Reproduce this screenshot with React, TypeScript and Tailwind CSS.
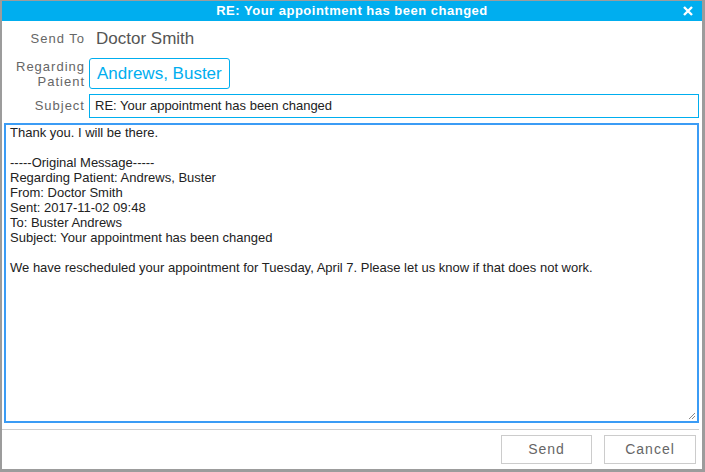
import React from "react";

export default function App() {
  const body = `Thank you. I will be there.

-----Original Message-----
Regarding Patient: Andrews, Buster
From: Doctor Smith
Sent: 2017-11-02 09:48
To: Buster Andrews
Subject: Your appointment has been changed

We have rescheduled your appointment for Tuesday, April 7. Please let us know if that does not work.`;
  return (
    <div
      className="w-[705px] h-[472px] bg-white border-t border-l-2 border-r-[3px] border-b-[3px] border-[#9c9c9c] flex flex-col overflow-hidden"
      style={{ fontFamily: '"Liberation Sans", Arial, sans-serif' }}
    >
      <div className="h-[20px] bg-[#00aeef] relative flex items-center justify-center text-white font-bold text-[13px] tracking-[0.5px]">
        <span>RE: Your appointment has been changed</span>
        <svg className="absolute right-[9px] top-[5px]" width="10" height="10" viewBox="0 0 10 10">
          <path d="M1 1 L9 9 M9 1 L1 9" stroke="white" strokeWidth="2.4" strokeLinecap="butt" />
        </svg>
      </div>
      <div className="flex flex-col pr-[3px] flex-1">
        <div className="flex items-center h-[24px] mt-[6px]">
          <div className="w-[83px] text-right text-[13px] text-[#666] tracking-[1px]">Send To</div>
          <div className="ml-[11px] text-[17px] text-[#555]">Doctor Smith</div>
        </div>
        <div className="flex items-center mt-[7px] h-[31px]">
          <div className="w-[83px] text-right text-[13px] text-[#666] tracking-[1px] leading-[15px]">
            Regarding
            <br />
            Patient
          </div>
          <div className="ml-[4px] h-[31px] w-[141px] border border-[#00aeef] rounded-[3px] flex items-center pl-[7px] text-[17px] text-[#00aeef]">
            Andrews, Buster
          </div>
        </div>
        <div className="flex items-center mt-[5px] h-[24px]">
          <div className="w-[83px] text-right text-[13px] text-[#666] tracking-[1px]">Subject</div>
          <div className="ml-[4px] h-[24px] flex-1 border border-[#00aeef] flex items-center pl-[5px] text-[13px] text-[#222]">
            RE: Your appointment has been changed
          </div>
        </div>
        <div className="mt-[5px] ml-[2px] h-[300px] border-2 border-[#3b9cf5] relative">
          <div className="pl-[4px] text-[13px] leading-[15px] text-[#222] whitespace-pre-wrap">{body}</div>
          <svg className="absolute right-[1px] bottom-[1px]" width="8" height="8" viewBox="0 0 8 8">
            <path d="M7 1 L1 7 M7 4 L4 7" stroke="#888" strokeWidth="1" />
          </svg>
        </div>
        <div className="mt-[6px] h-px bg-[#cfcfcf]" />
        <div className="flex justify-end gap-[12px] mt-[5px] pr-[3px]">
          <div className="w-[91px] h-[29px] border border-[#cccccc] flex items-center justify-center text-[14px] text-[#666] tracking-[1px]">Send</div>
          <div className="w-[92px] h-[29px] border border-[#cccccc] flex items-center justify-center text-[14px] text-[#666] tracking-[1px]">Cancel</div>
        </div>
      </div>
    </div>
  );
}
